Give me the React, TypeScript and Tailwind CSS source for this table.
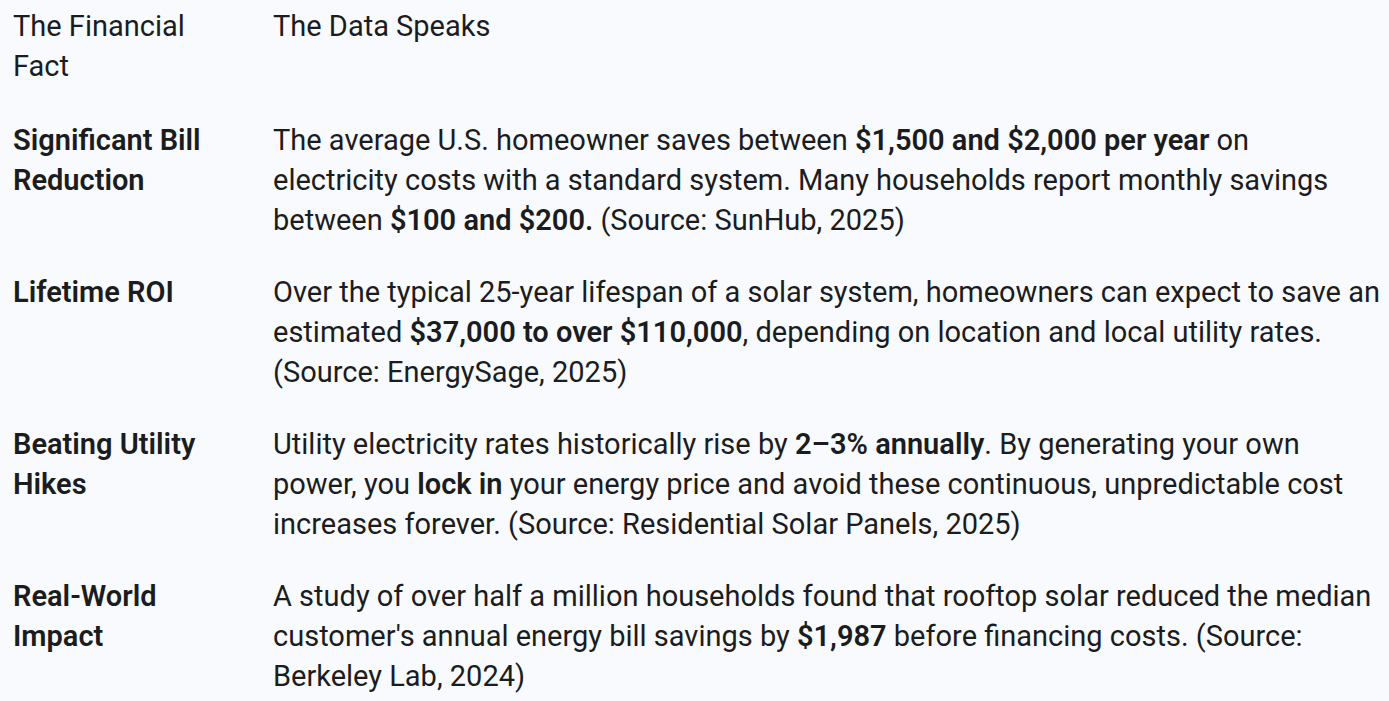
import React from "react";

type Row = { fact: React.ReactNode; data: React.ReactNode };

const rows: Row[] = [
  {
    fact: "Significant Bill Reduction",
    data: (
      <>
        The average U.S. homeowner saves between <b className="font-semibold">$1,500 and $2,000 per year</b> on
        electricity costs with a standard system. Many households report monthly savings between{" "}
        <b className="font-semibold">$100 and $200.</b> (Source: SunHub, 2025)
      </>
    ),
  },
  {
    fact: "Lifetime ROI",
    data: (
      <>
        Over the typical 25-year lifespan of a solar system, homeowners can expect to save an estimated{" "}
        <b className="font-semibold">$37,000 to over $110,000</b>, depending on location and local utility rates.
        (Source: EnergySage, 2025)
      </>
    ),
  },
  {
    fact: "Beating Utility Hikes",
    data: (
      <>
        Utility electricity rates historically rise by <b className="font-semibold">2–3% annually</b>. By generating
        your own power, you <b className="font-semibold">lock in</b> your energy price and avoid these continuous,
        unpredictable cost increases forever. (Source: Residential Solar Panels, 2025)
      </>
    ),
  },
  {
    fact: "Real-World Impact",
    data: (
      <>
        A study of over half a million households found that rooftop solar reduced the median customer's annual
        energy bill savings by <b className="font-semibold">$1,987</b> before financing costs. (Source: Berkeley Lab,
        2024)
      </>
    ),
  },
];

export default function App() {
  return (
    <div
      className="min-h-[701px] w-full bg-[#f8fafd] text-[#1b1c1d] text-[29px] leading-[40px]"
      style={{ fontFamily: "Roboto, 'Noto Sans', sans-serif" }}
    >
      <table className="w-[1389px] border-collapse table-fixed">
        <colgroup>
          <col className="w-[261px]" />
          <col />
        </colgroup>
        <thead>
          <tr className="align-top">
            <th className="pl-[13px] pr-[33px] pt-[6px] pb-[18px] text-left font-normal">The Financial Fact</th>
            <th className="pl-[12px] pr-[9px] pt-[6px] pb-[18px] text-left font-normal">The Data Speaks</th>
          </tr>
        </thead>
        <tbody>
          {rows.map((r, i) => (
            <tr key={i} className="align-top">
              <td className="pl-[13px] pr-[33px] py-4 font-semibold">{r.fact}</td>
              <td className="pl-[12px] pr-[9px] py-4">{r.data}</td>
            </tr>
          ))}
        </tbody>
      </table>
    </div>
  );
}
